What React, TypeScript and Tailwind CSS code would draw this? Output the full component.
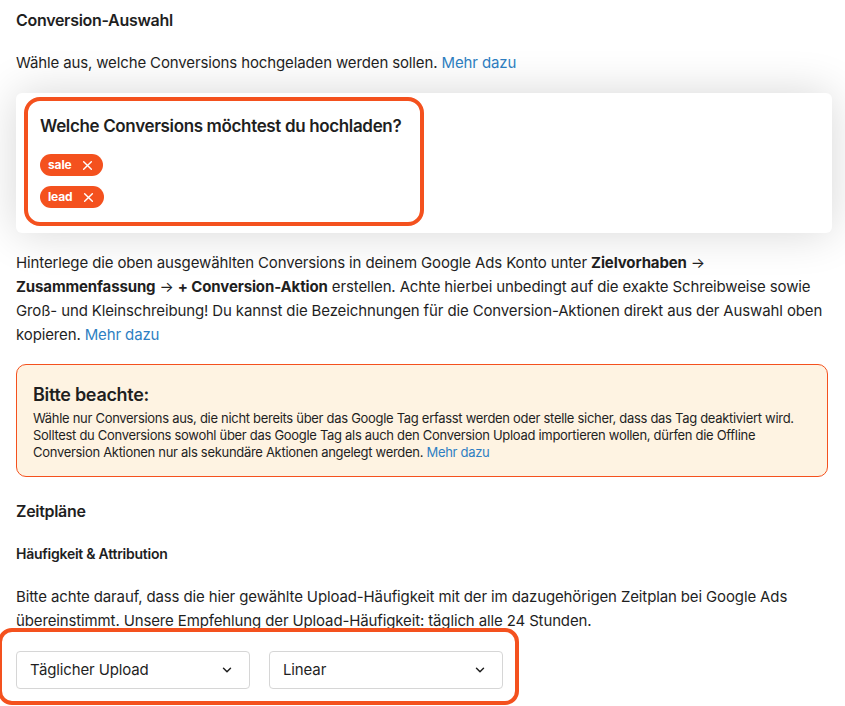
import React from "react";

const Chevron = () => (
  <svg width="14" height="14" viewBox="0 0 24 24" fill="none" stroke="#1f1f1f" strokeWidth="2.5" strokeLinecap="round" strokeLinejoin="round">
    <path d="M6 9l6 6 6-6" />
  </svg>
);

const X = () => (
  <svg width="11" height="11" viewBox="0 0 10 10" fill="none" stroke="white" strokeWidth="1.3" strokeLinecap="round">
    <path d="M1.5 1.5l7 7M8.5 1.5l-7 7" />
  </svg>
);

const Chip = ({ label }: { label: string }) => (
  <div className="inline-flex h-[22px] items-center gap-[10px] self-start rounded-full bg-[#f4511e] pl-[8px] pr-[10px] text-[12px] font-bold text-white">
    <span>{label}</span>
    <X />
  </div>
);

export default function App() {
  return (
    <div
      className="relative h-[706px] w-[845px] overflow-hidden bg-white tracking-[-0.13px] text-[#1f1f1f]"
      style={{ fontFamily: "Inter, 'Liberation Sans', sans-serif" }}
    >
      <div className="flex flex-col pl-4 pr-[13px]">
        <h2 className="mt-[9px] text-[16px] font-semibold leading-[22px] tracking-[-0.3px]">Conversion-Auswahl</h2>
        <p className="mt-[21px] text-[15px] leading-[22px]">
          Wähle aus, welche Conversions hochgeladen werden sollen.{" "}
          <span className="text-[#2e7fc2]">Mehr dazu</span>
        </p>

        <div className="relative mt-[19px] h-[140px] rounded-[6px] bg-white shadow-[0_0_45px_rgba(0,0,0,0.16)]">
          <div className="flex flex-col pl-6 pt-[22px]">
            <div className="text-[17px] font-semibold leading-[22px] tracking-[-0.35px]">Welche Conversions möchtest du hochladen?</div>
            <div className="mt-[17px] flex flex-col gap-[10px]">
              <Chip label="sale" />
              <Chip label="lead" />
            </div>
          </div>
          <div className="pointer-events-none absolute left-[8px] top-[4px] h-[129px] w-[400px] rounded-[16px] border-[4px] border-[#f4511e]" />
        </div>

        <p className="mt-[18px] text-[15px] leading-[24px]">
          Hinterlege die oben ausgewählten Conversions in deinem Google Ads Konto unter{" "}
          <b className="font-bold">Zielvorhaben</b> → <b className="font-bold">Zusammenfassung</b> →{" "}
          <b className="font-bold">+ Conversion-Aktion</b> erstellen. Achte hierbei unbedingt auf die exakte
          Schreibweise sowie Groß- und Kleinschreibung! Du kannst die Bezeichnungen für die Conversion-Aktionen
          direkt aus der Auswahl oben kopieren. <span className="text-[#2e7fc2]">Mehr dazu</span>
        </p>

        <div className="mr-[4px] mt-[17px] rounded-[10px] border border-[#f4511e] bg-[#fef3e2] pb-[15px] pl-[16px] pr-2 pt-[19px]">
          <div className="text-[18px] font-semibold leading-[22px] tracking-[-0.3px]">Bitte beachte:</div>
          <p className="mt-[4px] text-[13px] leading-[17px] tracking-[-0.3px]">
            Wähle nur Conversions aus, die nicht bereits über das Google Tag erfasst werden oder stelle sicher, dass
            das Tag deaktiviert wird. Solltest du Conversions sowohl über das Google Tag als auch den Conversion
            Upload importieren wollen, dürfen die Offline Conversion Aktionen nur als sekundäre Aktionen angelegt
            werden. <span className="text-[#2e7fc2]">Mehr dazu</span>
          </p>
        </div>

        <h2 className="mt-[23px] text-[16px] font-semibold leading-[22px] tracking-[-0.3px]">Zeitpläne</h2>
        <h3 className="mt-[21px] text-[14px] font-semibold leading-[22px] tracking-[-0.25px]">Häufigkeit &amp; Attribution</h3>
        <p className="mt-[20px] text-[15px] leading-[24px]">
          Bitte achte darauf, dass die hier gewählte Upload-Häufigkeit mit der im dazugehörigen Zeitplan bei Google
          Ads übereinstimmt. Unsere Empfehlung der Upload-Häufigkeit: täglich alle 24 Stunden.
        </p>

        <div className="relative mt-[18px] flex gap-[19px]">
          <div className="flex h-[38px] w-[234px] items-center justify-between rounded-[4px] border border-[#d6d6d6] pl-[13px] pr-[15px] text-[15px]">
            <span>Täglicher Upload</span>
            <Chevron />
          </div>
          <div className="flex h-[38px] w-[234px] items-center justify-between rounded-[4px] border border-[#d6d6d6] pl-[13px] pr-[15px] text-[15px]">
            <span>Linear</span>
            <Chevron />
          </div>
          <div className="pointer-events-none absolute left-[-18px] top-[-23px] h-[77px] w-[521px] rounded-[14px] border-[4px] border-[#f4511e]" />
        </div>
      </div>
    </div>
  );
}
